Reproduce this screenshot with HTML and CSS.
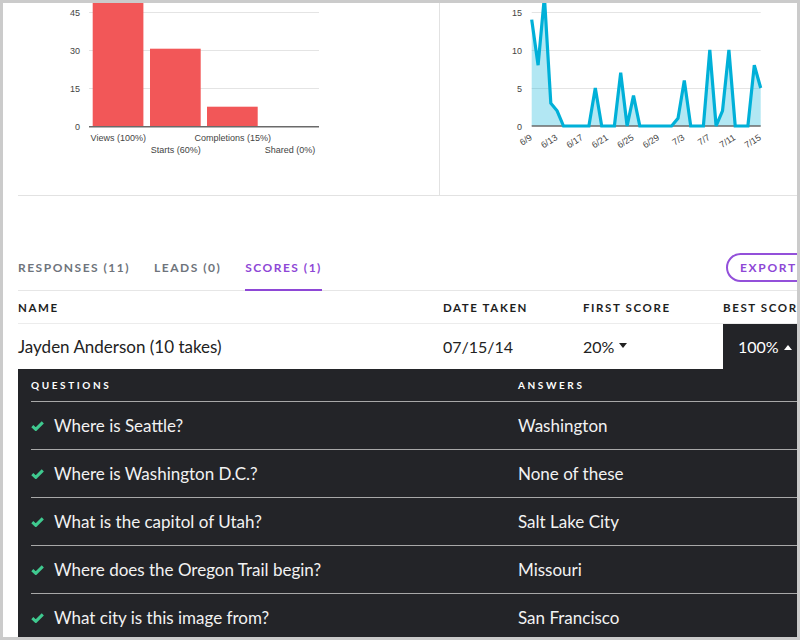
FILE: index.html
```html
<!DOCTYPE html>
<html lang="en">
<head>
<meta charset="utf-8">
<title>Scores</title>
<link rel="stylesheet" href="styles.css">
</head>
<body>
<div class="frame">
  <div class="page">
    <div class="charts">
      <div class="chart chart-left">
        <svg class="chart-svg" width="422" height="192" viewBox="0 0 422 192">
          <g class="grid">
            <line x1="71" y1="9.5" x2="301" y2="9.5"/>
            <line x1="71" y1="47.5" x2="301" y2="47.5"/>
            <line x1="71" y1="85.5" x2="301" y2="85.5"/>
          </g>
          <g class="axis-labels" text-anchor="end">
            <text x="62" y="13">45</text>
            <text x="62" y="51">30</text>
            <text x="62" y="89">15</text>
            <text x="62" y="127">0</text>
          </g>
          <g class="bars">
            <rect x="74.7" y="-20" width="50.7" height="143.7"/>
            <rect x="132" y="45.7" width="50.7" height="78"/>
            <rect x="189" y="103.7" width="50.7" height="20"/>
          </g>
          <line class="baseline" x1="71" y1="123.7" x2="301" y2="123.7"/>
          <g class="axis-labels" text-anchor="middle">
            <text x="100.3" y="138.3">Views (100%)</text>
            <text x="157.8" y="150.3">Starts (60%)</text>
            <text x="214.8" y="138.3">Completions (15%)</text>
            <text x="272" y="150.3">Shared (0%)</text>
          </g>
        </svg>
      </div>
      <div class="chart chart-right">
        <svg class="chart-svg" width="400" height="192" viewBox="0 0 400 192">
          <g class="grid">
            <line x1="91.7" y1="9.5" x2="320.7" y2="9.5"/>
            <line x1="91.7" y1="47.5" x2="320.7" y2="47.5"/>
            <line x1="91.7" y1="85.5" x2="320.7" y2="85.5"/>
          </g>
          <g class="axis-labels" text-anchor="end">
            <text x="82" y="12.5">15</text>
            <text x="82" y="50.5">10</text>
            <text x="82" y="88.5">5</text>
            <text x="82" y="126.5">0</text>
          </g>
          <polygon class="area" points="91.7,16.6 98.1,62.2 104.4,-6.2 110.8,100.2 117.1,107.8 123.5,123 129.9,123 136.2,123 142.6,123 148.9,123 155.3,85 161.7,123 168,123 174.4,123 180.7,69.8 187.1,123 193.5,92.6 199.8,123 206.2,123 212.5,123 218.9,123 225.3,123 231.6,123 238,115.4 244.3,77.4 250.7,123 257.1,123 263.4,123 269.8,47 276.1,123 282.5,107.8 288.9,47 295.2,123 301.6,123 307.9,123 314.3,62.2 320.7,85 320.7,123 91.7,123"/>
          <line class="baseline" x1="91.7" y1="123" x2="320.7" y2="123"/>
          <polyline class="line" points="91.7,16.6 98.1,62.2 104.4,-6.2 110.8,100.2 117.1,107.8 123.5,123 129.9,123 136.2,123 142.6,123 148.9,123 155.3,85 161.7,123 168,123 174.4,123 180.7,69.8 187.1,123 193.5,92.6 199.8,123 206.2,123 212.5,123 218.9,123 225.3,123 231.6,123 238,115.4 244.3,77.4 250.7,123 257.1,123 263.4,123 269.8,47 276.1,123 282.5,107.8 288.9,47 295.2,123 301.6,123 307.9,123 314.3,62.2 320.7,85"/>
          <g class="axis-labels" text-anchor="end">
            <text transform="translate(92.7 136) rotate(-33)">6/9</text>
            <text transform="translate(118.1 136) rotate(-33)">6/13</text>
            <text transform="translate(143.6 136) rotate(-33)">6/17</text>
            <text transform="translate(169 136) rotate(-33)">6/21</text>
            <text transform="translate(194.5 136) rotate(-33)">6/25</text>
            <text transform="translate(219.9 136) rotate(-33)">6/29</text>
            <text transform="translate(245.3 136) rotate(-33)">7/3</text>
            <text transform="translate(270.8 136) rotate(-33)">7/7</text>
            <text transform="translate(296.2 136) rotate(-33)">7/11</text>
            <text transform="translate(321.7 136) rotate(-33)">7/15</text>
          </g>
        </svg>
      </div>
    </div>

    <div class="toolbar">
      <nav class="tabs">
        <a class="tab">Responses (11)</a>
        <a class="tab">Leads (0)</a>
        <a class="tab tab-active">Scores (1)</a>
      </nav>
      <button class="export">Export Scores</button>
    </div>

    <div class="table">
      <div class="row thead">
        <div class="col col-name">Name</div>
        <div class="col col-date">Date Taken</div>
        <div class="col col-first">First Score</div>
        <div class="col col-best">Best Score</div>
      </div>
      <div class="row trow">
        <div class="col col-name name-text">Jayden Anderson (10 takes)</div>
        <div class="col col-date">07/15/14</div>
        <div class="col col-first">20%<span class="caret caret-down"></span></div>
        <div class="col col-best col-open">100%<span class="caret caret-up"></span></div>
      </div>

      <div class="detail">
        <div class="drow dhead">
          <div class="q">Questions</div>
          <div class="a">Answers</div>
        </div>
        <div class="drow">
          <div class="q"><svg class="check" width="13" height="10" viewBox="0 0 13 10"><path d="M1.3 5.2 L4.8 8.4 L11.8 1.4"/></svg>Where is Seattle?</div>
          <div class="a">Washington</div>
        </div>
        <div class="drow">
          <div class="q"><svg class="check" width="13" height="10" viewBox="0 0 13 10"><path d="M1.3 5.2 L4.8 8.4 L11.8 1.4"/></svg>Where is Washington D.C.?</div>
          <div class="a">None of these</div>
        </div>
        <div class="drow">
          <div class="q"><svg class="check" width="13" height="10" viewBox="0 0 13 10"><path d="M1.3 5.2 L4.8 8.4 L11.8 1.4"/></svg>What is the capitol of Utah?</div>
          <div class="a">Salt Lake City</div>
        </div>
        <div class="drow">
          <div class="q"><svg class="check" width="13" height="10" viewBox="0 0 13 10"><path d="M1.3 5.2 L4.8 8.4 L11.8 1.4"/></svg>Where does the Oregon Trail begin?</div>
          <div class="a">Missouri</div>
        </div>
        <div class="drow">
          <div class="q"><svg class="check" width="13" height="10" viewBox="0 0 13 10"><path d="M1.3 5.2 L4.8 8.4 L11.8 1.4"/></svg>What city is this image from?</div>
          <div class="a">San Francisco</div>
        </div>
      </div>
    </div>
  </div>
</div>
</body>
</html>
```

FILE: styles.css
```css
* { box-sizing: border-box; }

body {
  margin: 0;
  background: #fff;
  font-family: "Lato", "Noto Sans", sans-serif;
  color: #222;
}

.frame {
  width: 800px;
  height: 640px;
  border: 3px solid #cbcbcb;
  overflow: hidden;
  background: #fff;
}

.page {
  width: 1000px;
  padding-left: 15px;
}

/* charts */
.charts {
  display: flex;
  height: 193px;
  border-bottom: 1px solid #e2e2e2;
}

.chart-left {
  width: 422px;
  border-right: 1px solid #e2e2e2;
}

.chart-right {
  width: 400px;
}

.chart-svg {
  display: block;
  overflow: hidden;
}

.grid line {
  stroke: #e4e4e4;
  stroke-width: 1;
}

.baseline {
  stroke: #6a6a6a;
  stroke-width: 1.5;
}

.axis-labels text {
  font-family: "Liberation Sans", Arial, sans-serif;
  font-size: 9px;
  fill: #444;
}

.bars rect {
  fill: #f25758;
}

.area {
  fill: #00b0d8;
  fill-opacity: 0.3;
}

.line {
  fill: none;
  stroke: #00b0d8;
  stroke-width: 3.2;
  stroke-linejoin: miter;
}

/* toolbar */
.toolbar {
  display: flex;
  align-items: flex-end;
  margin-top: 57px;
  border-bottom: 1px solid #e6e6e6;
}

.tabs {
  display: flex;
  width: 708px;
  flex: none;
}

.tab {
  display: block;
  font-size: 12px;
  line-height: 16px;
  font-weight: 700;
  letter-spacing: 1.5px;
  text-transform: uppercase;
  color: #6e747c;
  padding-bottom: 13px;
  border-bottom: 2px solid transparent;
  margin-bottom: -1px;
  margin-right: 24px;
}

.tab-active {
  color: #8e47d6;
  border-bottom-color: #8e47d6;
}

.export {
  flex: none;
  height: 29px;
  margin-bottom: 8px;
  padding: 0 14px 0 12px;
  border: 2px solid #9350da;
  border-radius: 15px;
  background: #fff;
  font-family: "Lato", sans-serif;
  font-size: 12px;
  font-weight: 700;
  letter-spacing: 1.7px;
  text-transform: uppercase;
  color: #8e47d6;
}

/* table */
.row {
  display: flex;
  align-items: center;
  border-bottom: 1px solid #ececec;
}

.col-name { width: 425px; }
.col-date { width: 140px; }
.col-first { width: 140px; }
.col-best { width: 200px; }

.thead {
  height: 33px;
  font-size: 11.5px;
  font-weight: 700;
  letter-spacing: 1.6px;
  text-transform: uppercase;
  color: #1e1e1e;
}

.trow {
  height: 45px;
  border-bottom: none;
  font-size: 16px;
  color: #222;
}

.trow .col {
  display: flex;
  align-items: center;
}

.trow .name-text {
  font-size: 17px;
}

.col-open {
  align-self: stretch;
  background: #232428;
  color: #fff;
  padding-left: 15px;
}

.caret {
  display: inline-block;
  width: 0;
  height: 0;
  margin-left: 5px;
  border-left: 4.5px solid transparent;
  border-right: 4.5px solid transparent;
}

.caret-down {
  border-top: 5px solid #222;
  margin-top: -3px;
}

.caret-up {
  border-bottom: 5px solid #fff;
  margin-top: 2px;
}

/* detail panel */
.detail {
  background: #232428;
  padding-left: 13px;
  color: #f2f2f2;
}

.drow {
  display: flex;
  align-items: center;
  height: 48px;
  border-bottom: 1px solid #a8a8a8;
  font-size: 17px;
}

.dhead {
  height: 33px;
  font-size: 10px;
  font-weight: 700;
  letter-spacing: 2.6px;
  text-transform: uppercase;
  color: #fff;
}

.q {
  width: 487px;
  display: flex;
  align-items: center;
}

.check {
  display: block;
  margin-right: 10px;
  flex: none;
}

.check path {
  fill: none;
  stroke: #3fc98f;
  stroke-width: 3;
}
```
